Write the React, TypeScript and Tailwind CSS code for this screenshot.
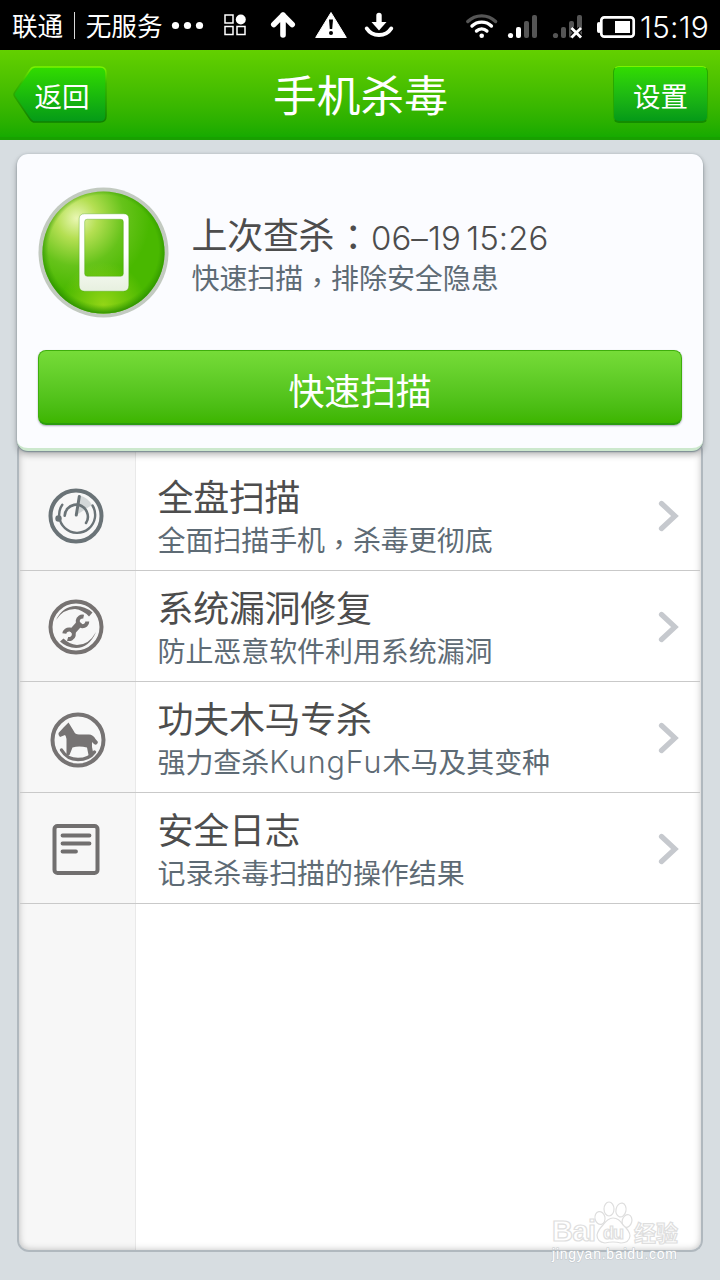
import type { ReactNode } from 'react';

const cjk = "font-['Noto_Sans_CJK_SC','Liberation_Sans',sans-serif]";

function Comma() {
  return <span lang="zh-TW" className="relative top-[4px] font-['Noto_Sans_CJK_TC',sans-serif]">，</span>;
}

function Colon() {
  return <span lang="zh-TW" className="relative left-[1px] top-[2px] font-['Noto_Sans_CJK_TC',sans-serif]">：</span>;
}

function StatusBar() {
  return (
    <header className="flex h-[50px] shrink-0 items-center bg-black pl-3 pr-[12px] text-white">
      <div className="flex w-[152px] shrink-0 items-center whitespace-nowrap text-[25.600px] leading-[48px]">
        <span className="shrink-0">联通</span>
        <span className="mx-[10.500px] h-[27px] w-[1.500px] shrink-0 bg-[#d8d8d8]" />
        <span className="shrink-0">无服务</span>
      </div>
      <svg className="ml-[4px] h-[50px] w-[232px] shrink-0" viewBox="168 0 232 50" fill="#fff">
        <circle cx="175.5" cy="25.5" r="3.6" />
        <circle cx="187.5" cy="25.5" r="3.6" />
        <circle cx="199.5" cy="25.5" r="3.6" />
        <g fill="none" stroke="#fff" strokeWidth="1.5">
          <rect x="225" y="15" width="8" height="8" />
          <rect x="225" y="26.500" width="8" height="8" />
          <rect x="237" y="26.500" width="8" height="8" />
        </g>
        <circle cx="240.8" cy="19.5" r="5" />
        <path d="M283 35V15M273.8 24.5 283 15.2l9.2 9.3" fill="none" stroke="#fff" strokeWidth="5.6" strokeLinecap="round" strokeLinejoin="round" />
        <path d="M331 12.500 346.3 37.5H315.7Z" stroke="#fff" strokeWidth="1" strokeLinejoin="round" />
        <path d="M329 19.5h4l-.8 9.5h-2.4z" fill="#000" />
        <circle cx="331" cy="33" r="2" fill="#000" />
        <path d="M379 15.5V24" fill="none" stroke="#fff" strokeWidth="5.4" strokeLinecap="round" />
        <path d="M371.5 22h15L379 30.5Z" />
        <path d="M366.8 28.5Q371 35 379 35T391.200 28.500" fill="none" stroke="#fff" strokeWidth="4" strokeLinecap="round" />
      </svg>
      <svg className="ml-auto h-[50px] w-[174px] shrink-0" viewBox="463 0 174 50" fill="#fff">
        <g fill="none" strokeWidth="3.4" strokeLinecap="round">
          <path d="M466.8 21.500a20 20 0 0 1 27.800 0" stroke="#555" />
          <path d="M471 26a14 14 0 0 1 19.400 0" stroke="#fff" />
          <path d="M475.500 31a7.500 7.500 0 0 1 10.400 0" stroke="#fff" />
        </g>
        <circle cx="480.700" cy="35.700" r="2.300" />
        <circle cx="509.500" cy="35.500" r="2.600" />
        <rect x="515" y="27" width="5" height="11" rx="2" />
        <rect x="523" y="21" width="5" height="17" rx="2" fill="#555" />
        <rect x="531" y="15" width="5" height="23" rx="2" fill="#555" />
        <g fill="#555">
          <circle cx="554.500" cy="35.500" r="2.600" />
          <rect x="560" y="27" width="5" height="11" rx="2" />
          <rect x="568" y="21" width="5" height="17" rx="2" />
          <rect x="576" y="15" width="5" height="23" rx="2" />
        </g>
        <path d="m571 28.500 8.500 8.500m0-8.500-8.500 8.500" stroke="#000" strokeWidth="5" />
        <path d="m570.500 28 9.500 9.500m0-9.500-9.500 9.500" stroke="#fff" strokeWidth="2.800" />
        <rect x="600.300" y="17.300" width="32.400" height="19.400" rx="3" fill="none" stroke="#fff" strokeWidth="2.700" />
        <rect x="596" y="22" width="4" height="11" rx="2" />
        <rect x="614" y="21" width="15" height="12" />
      </svg>
      <span className="ml-[2px] w-[68px] shrink-0 whitespace-nowrap font-['Inter','Liberation_Sans',sans-serif] text-[30px] font-light leading-[50px] tracking-[0.200px]">
        <span className="relative top-[2px]">15:19</span>
      </span>
    </header>
  );
}

function TitleBar() {
  return (
    <div className="flex h-[90px] shrink-0 items-start justify-between border-b-[3px] border-[#18a000] bg-linear-to-b from-[#63d000] to-[#16aa00] pl-[13px] pr-[13px] pt-4 text-white">
      <button className="relative h-[58px] w-[94px] text-[27.500px] leading-[54px]">
        <svg className="absolute inset-0" width="94" height="58" viewBox="0 0 94 58">
          <defs>
            <linearGradient id="back" x1="0" y1="0" x2="0" y2="1">
              <stop offset="0" stopColor="#32dc00" />
              <stop offset="1" stopColor="#049a18" />
            </linearGradient>
            <linearGradient id="backEdge" x1="0" y1="0" x2="0" y2="1">
              <stop offset="0" stopColor="#7bf400" />
              <stop offset=".3" stopColor="#35b800" />
              <stop offset="1" stopColor="#108000" />
            </linearGradient>
          </defs>
          <path d="M22 1H87Q93 1 93 7V50Q93 56 87 56H22Q19 56 17 53L2 31Q0 28.500 2 26L17 4Q19 1 22 1Z" fill="url(#back)" stroke="url(#backEdge)" strokeWidth="1.500" />
        </svg>
        <span className="relative left-[2px] top-[0px]">返回</span>
      </button>
      <h1 className="pl-px text-[43.700px] leading-[55px]">手机杀毒</h1>
      <button className="mr-[-1px] h-[57px] w-[95px] rounded-md border-x border-b-2 border-t border-x-[#28a800] border-b-[#148c00] border-t-[#7bf400] bg-linear-to-b from-[#32dc00] to-[#049a18] text-[27.500px] leading-[56px]">
        设置
      </button>
    </div>
  );
}

function PhoneBadge() {
  return (
    <svg className="size-[131px] shrink-0" viewBox="0 0 132 132">
      <defs>
        <radialGradient id="orb" cx=".28" cy=".22" r=".6">
          <stop offset="0" stopColor="#eaf7b4" />
          <stop offset=".28" stopColor="#b4df52" />
          <stop offset=".65" stopColor="#66c31a" />
          <stop offset="1" stopColor="#49b800" />
        </radialGradient>
        <radialGradient id="rim" cx=".5" cy=".48" r=".53">
          <stop offset=".85" stopColor="#319a00" stopOpacity="0" />
          <stop offset="1" stopColor="#268900" />
        </radialGradient>
        <radialGradient id="glow" cx=".5" cy=".93" r=".35">
          <stop offset="0" stopColor="#a6dd1c" stopOpacity=".8" />
          <stop offset="1" stopColor="#a6dd1c" stopOpacity="0" />
        </radialGradient>
        <linearGradient id="body" x1="0" y1="0" x2="0" y2="1">
          <stop offset=".5" stopColor="#fff" />
          <stop offset="1" stopColor="#e7f0df" />
        </linearGradient>
      </defs>
      <circle cx="66" cy="66" r="65.500" fill="#c2cac0" />
      <circle cx="66" cy="66" r="61.500" fill="url(#orb)" />
      <circle cx="66" cy="66" r="61.500" fill="url(#glow)" />
      <circle cx="66" cy="66" r="61.500" fill="url(#rim)" />
      <path fillRule="evenodd" fill="url(#body)" stroke="#3f9c08" strokeOpacity=".35" d="M47 27H86Q91.500 27 91.500 32V99Q91.500 105 86 105H47Q41.500 105 41.500 99V32Q41.500 27 47 27ZM49.500 32.500Q47 32.500 47 35V87.500Q47 90 49.500 90H83.500Q86 90 86 87.500V35Q86 32.500 83.500 32.500Z" />
    </svg>
  );
}

function SummaryCard() {
  return (
    <section className="relative z-10 h-[297px] shrink-0 rounded-[11px] border-b-[3px] border-[#cce8cd] bg-[#fbfcff] px-[21px] pt-[33px] shadow-[0_1px_1px_#7f8f96,0_4px_6px_rgba(0,0,0,0.28),0_0_3px_#b4bcc2]">
      <div className="flex h-[163px] items-start">
        <PhoneBadge />
        <div className="ml-[22.500px] whitespace-nowrap pt-[23px]">
          <div className="flex h-[48px] text-[36px] leading-[46px] text-[#4d4d4d]">
            <span className="w-[179.500px] tracking-[-0.300px]">上次查杀<Colon /></span>
            <span className="pt-[5px] font-['Inter','Liberation_Sans',sans-serif] text-[33px] font-light leading-[46px] tracking-[0.050px] [word-spacing:-4px]">06–19 15:26</span>
          </div>
          <div className="h-[38px] text-[28px] leading-[38px] tracking-[-0.080px] text-[#5e6b75]">快速扫描<Comma />排除安全隐患</div>
        </div>
      </div>
      <button className="h-[75px] w-full rounded-[8px] border border-b-2 border-[#3fae0c] border-b-[#2c9c10] bg-linear-to-b from-[#76dc38] to-[#3db500] pt-[2px] text-[36px] leading-[70px] tracking-[-0.300px] text-white shadow-[0_1px_2px_#aab]">
        <span className="relative top-px">快速扫描</span>
      </button>
    </section>
  );
}

function RadarIcon() {
  return (
    <svg className="size-[58px]" viewBox="0 0 58 58" fill="none" stroke="#6a7377" strokeLinecap="round">
      <path d="M31 27 33 8.500A20 20 0 0 1 45 18Z" fill="#d3d7d8" stroke="none" />
      <circle cx="29" cy="29" r="25.500" strokeWidth="4" />
      <path d="M15.300 17.700A18 18 0 1 0 45.500 18.500" strokeWidth="2.400" />
      <path d="M17.700 28.700A11.500 11.500 0 0 1 39.700 24.500Q42.500 31 39 36" strokeWidth="2.600" />
      <path d="M29.300 28 32.300 9.500" strokeWidth="3" />
      <circle cx="11.500" cy="31.500" r="3.200" fill="#6a7377" stroke="none" />
    </svg>
  );
}

function WrenchIcon() {
  return (
    <svg className="size-[58px]" viewBox="0 0 58 58" fill="none">
      <circle cx="29" cy="29" r="25.500" stroke="#767271" strokeWidth="4" />
      <path d="M9 22Q16 8 29 8Q38 8 45.500 14.500L42 18.500Q36 12 28 11Q16 11 9 22Z" fill="#767271" />
      <path d="M49 34Q42 50 29 50Q20 50 13 43.500L16.500 40.500Q22 46 30 47Q42 47 49 34Z" fill="#767271" />
      <path d="m24.500 34.500 9-10" stroke="#767271" strokeWidth="6.500" />
      <path d="M36.600 18.700A4.800 4.800 0 1 0 40.300 23.400" stroke="#767271" strokeWidth="4" />
      <path d="M17.300 35.600A4.800 4.800 0 1 1 20.600 40.800" stroke="#767271" strokeWidth="4" />
    </svg>
  );
}

function HorseIcon() {
  return (
    <svg className="ml-[3px] mt-[5px] size-[58px]" viewBox="0 0 58 58" fill="#767373">
      <circle cx="29" cy="29" r="25.500" fill="none" stroke="#767373" strokeWidth="4" />
      <path d="M19.500 11.500 25 20.500Q26 23.500 30 23.500H40Q44 23.500 46.500 28L49 31Q48 35 45 33L43 31Q42.500 36 44 41L43 44H39.500L38 36.500Q30 34.500 23.500 36.500L20.500 44H17.500V28Q17 25 16 24L11 26Q9 24 9.500 22L15 16Z" />
      <path d="M12.500 39Q18 48.500 29 48.500T45.500 41" fill="none" stroke="#767373" strokeWidth="3.400" strokeLinecap="round" />
    </svg>
  );
}

function LogIcon() {
  return (
    <svg className="size-[58px]" viewBox="0 0 58 58" fill="none" stroke="#716f6f" strokeLinecap="round">
      <rect x="7.500" y="6" width="43" height="47" rx="3" strokeWidth="4" />
      <path d="M15.500 15.500H42.500M15.500 23.500H42.500M15.500 31.500H29" strokeWidth="3.800" />
    </svg>
  );
}

interface MenuItem {
  title: string;
  detail: ReactNode;
  icon: ReactNode;
}

const items: MenuItem[] = [
  { title: '全盘扫描', detail: <>全面扫描手机<Comma />杀毒更彻底</>, icon: <RadarIcon /> },
  { title: '系统漏洞修复', detail: '防止恶意软件利用系统漏洞', icon: <WrenchIcon /> },
  {
    title: '功夫木马专杀',
    detail: (
      <>
        强力查杀<span className="font-['Inter','Liberation_Sans',sans-serif] text-[30.500px] font-light leading-none tracking-[0.900px]">KungFu</span>木马及其变种
      </>
    ),
    icon: <HorseIcon />,
  },
  { title: '安全日志', detail: '记录杀毒扫描的操作结果', icon: <LogIcon /> },
];

function MenuRow({ title, detail, icon }: MenuItem) {
  return (
    <li className="flex h-[111px] items-center border-b border-[#c9c9c9] pt-px">
      <div className="flex w-[116px] shrink-0 justify-center pr-[4px]">{icon}</div>
      <div className="flex-1 whitespace-nowrap pl-[21.500px]">
        <div className="h-[47px] text-[36px] leading-[44px] tracking-[-0.300px] text-[#4d4d4d]">{title}</div>
        <div className="h-[38px] text-[28px] leading-[38px] tracking-[-0.080px] text-[#5e6b75]">{detail}</div>
      </div>
      <svg className="mr-[20px] h-[32px] w-[22px] shrink-0" viewBox="0 0 22 32" fill="none" stroke="#c6c9ce" strokeWidth="5.200" strokeLinecap="round">
        <path d="m3.500 3.500 13.500 12.500L3.500 28.500" />
      </svg>
    </li>
  );
}

function Watermark() {
  return (
    <svg className="absolute bottom-[12px] right-[36px]" width="140" height="68" viewBox="0 0 140 68">
      <g fill="#fff" stroke="#dedede" strokeWidth="1.200">
        <text x="8" y="41" fontFamily="Liberation Sans, sans-serif" fontSize="29" fontWeight="bold" textLength="44">Bai</text>
        <ellipse cx="56" cy="18" rx="5" ry="6.500" transform="rotate(-12 56 18)" />
        <ellipse cx="65" cy="9" rx="5" ry="7" />
        <ellipse cx="77" cy="10" rx="5" ry="7" transform="rotate(12 77 10)" />
        <ellipse cx="83" cy="21" rx="4.800" ry="6.500" transform="rotate(15 83 21)" />
        <path d="M69 18Q75 18 79 25Q86 31 86 36Q85 43 77 43Q69 41 61 43Q53 42 53 35Q54 30 59 25Q64 18 69 18Z" />
        <text x="59" y="39" fontFamily="Liberation Sans, sans-serif" fontSize="18" fontWeight="bold" textLength="21">du</text>
        <text x="90" y="41" fontFamily="Noto Sans CJK SC, sans-serif" fontSize="22" fontWeight="bold">经验</text>
      </g>
      <text x="8" y="59" fontFamily="Liberation Sans, sans-serif" fontSize="14" fill="#fff" stroke="#c3c9cd" strokeWidth="1.200" paintOrder="stroke" textLength="125">jingyan.baidu.com</text>
    </svg>
  );
}

export default function App() {
  return (
    <div className={`${cjk} relative flex h-[1280px] w-[720px] flex-col overflow-hidden bg-[#d7dde1]`}>
      <StatusBar />
      <TitleBar />
      <main className="flex flex-1 flex-col px-[17px] pb-7 pt-[14px]">
        <SummaryCard />
        <ul className="-mt-3 flex-1 rounded-[12px] border-x-2 border-b-2 border-[#b0b8be] bg-[linear-gradient(90deg,#f7f7f7_116px,#e9e9e9_116px,#e9e9e9_117px,#fff_117px)] px-[1px] pt-[21px] shadow-[inset_0_0_7px_rgba(0,0,0,0.25)]">
          {items.map((item) => (
            <MenuRow key={item.title} {...item} />
          ))}
        </ul>
      </main>
      <Watermark />
    </div>
  );
}
